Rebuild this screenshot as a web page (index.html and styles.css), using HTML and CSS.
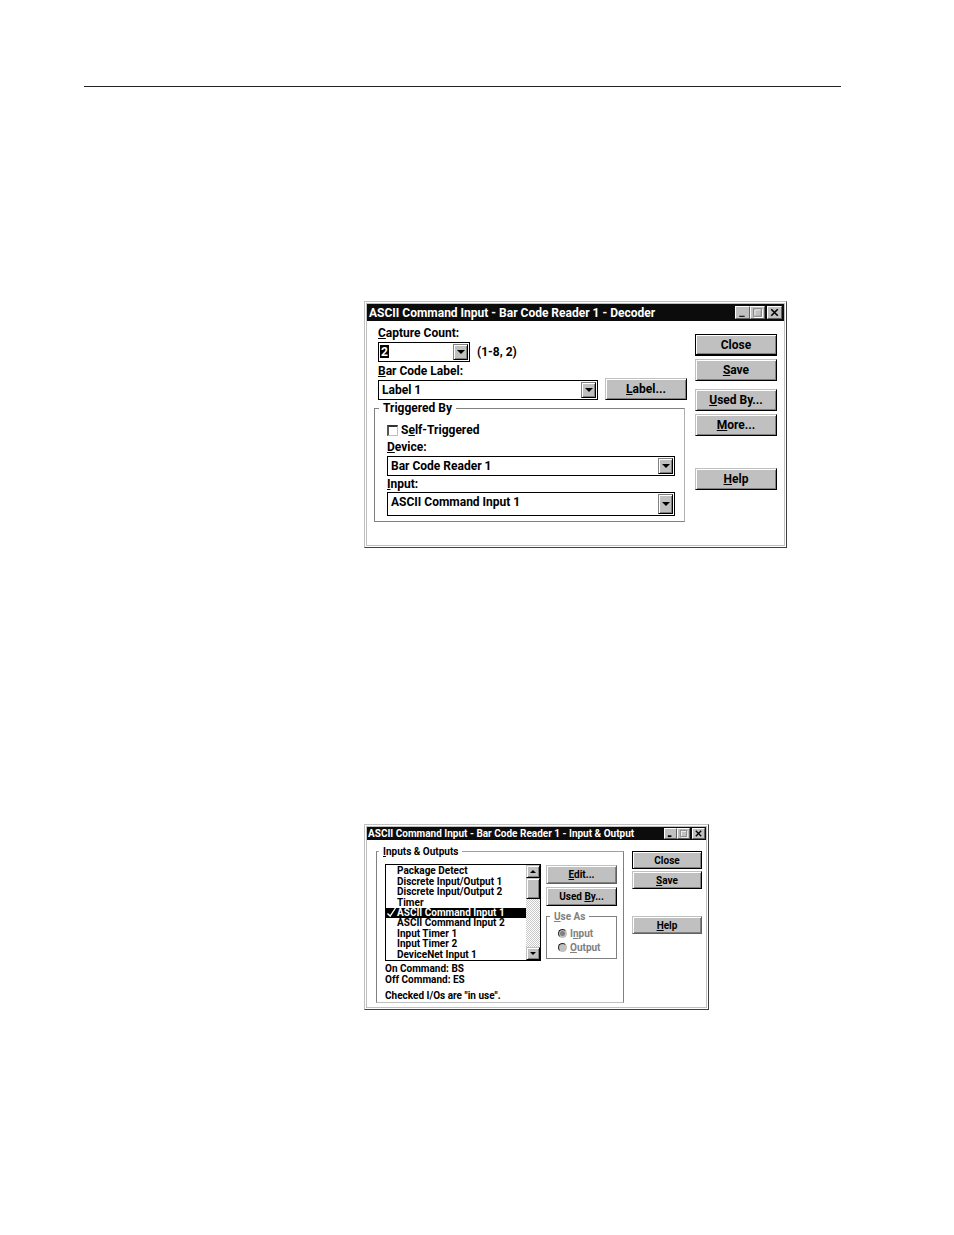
FILE: index.html
```html
<!DOCTYPE html>
<html lang="en">

<head>
    <meta charset="UTF-8">
    <title>ASCII Command Input</title>
    <link rel="stylesheet" href="styles.css">
</head>
<body>
<hr class="page-rule">

<main class="figures">
    <section class="dialog" aria-labelledby="decoder-title">
        <div class="frame">
            <header class="titlebar">
                <h2 id="decoder-title">ASCII Command Input - Bar Code Reader 1 - Decoder</h2>
                <div class="window-buttons">
                    <button type="button" aria-label="Minimize"><svg viewBox="0 0 12 10"><path d="M3 8.5h5" stroke="#000" stroke-width="1"/></svg></button>
                    <button type="button" aria-label="Maximize" disabled><svg viewBox="0 0 12 10"><path d="M3.5 2.5h7v7h-7z" fill="none" stroke="#fff"/><path d="M2.5 1.5h7v7h-7z" fill="none" stroke="#808080"/></svg></button>
                    <button type="button" aria-label="Close window"><svg viewBox="0 0 12 10"><path d="M3 2l6 6M9 2l-6 6" stroke="#000" stroke-width="1.5"/></svg></button>
                </div>
            </header>
            <form class="body">
                <div class="main">
                    <div class="field">
                        <label for="capture"><u>C</u>apture Count:</label>
                        <div class="row">
                            <div class="combo combo-short">
                                <input id="capture" class="highlighted" type="text" value="2">
                                <span class="arrow"><svg viewBox="0 0 8 4"><path d="M0 0h8L4 4z"/></svg></span>
                            </div>
                            <span>(1-8, 2)</span>
                        </div>
                    </div>
                    <div class="field">
                        <label for="barcode"><u>B</u>ar Code Label:</label>
                        <div class="row">
                            <div class="combo">
                                <select id="barcode"><option>Label 1</option></select>
                                <span class="arrow"><svg viewBox="0 0 8 4"><path d="M0 0h8L4 4z"/></svg></span>
                            </div>
                            <button type="button" class="btn btn-label"><span><u>L</u>abel...</span></button>
                        </div>
                    </div>
                    <fieldset class="group">
                        <legend>Triggered By</legend>
                        <label class="check"><input type="checkbox"><span>S<u>e</u>lf-Triggered</span></label>
                        <label for="device"><u>D</u>evice:</label>
                        <div class="combo">
                            <select id="device"><option>Bar Code Reader 1</option></select>
                            <span class="arrow"><svg viewBox="0 0 8 4"><path d="M0 0h8L4 4z"/></svg></span>
                        </div>
                        <label for="input"><u>I</u>nput:</label>
                        <div class="combo combo-tall">
                            <select id="input"><option>ASCII Command Input 1</option></select>
                            <span class="arrow"><svg viewBox="0 0 8 4"><path d="M0 0h8L4 4z"/></svg></span>
                        </div>
                    </fieldset>
                </div>
                <div class="side">
                    <button type="button" class="btn btn-default">Close</button>
                    <button type="button" class="btn"><span><u>S</u>ave</span></button>
                    <button type="button" class="btn btn-apart"><span><u>U</u>sed By...</span></button>
                    <button type="button" class="btn"><span><u>M</u>ore...</span></button>
                    <button type="button" class="btn btn-help"><span><u>H</u>elp</span></button>
                </div>
            </form>
        </div>
    </section>

    <section class="dialog dialog-small" aria-labelledby="io-title">
        <div class="frame">
            <header class="titlebar">
                <h2 id="io-title">ASCII Command Input - Bar Code Reader 1 - Input &amp; Output</h2>
                <div class="window-buttons">
                    <button type="button" aria-label="Minimize"><svg viewBox="0 0 12 10"><path d="M3 8h4" stroke="#000" stroke-width="2"/></svg></button>
                    <button type="button" aria-label="Maximize" disabled><svg viewBox="0 0 12 10"><path d="M3.5 2.5h7v7h-7z" fill="none" stroke="#fff"/><path d="M2.5 1.5h7v7h-7z" fill="none" stroke="#808080"/></svg></button>
                    <button type="button" aria-label="Close window"><svg viewBox="0 0 12 10"><path d="M3 2l6 6M9 2l-6 6" stroke="#000" stroke-width="1.5"/></svg></button>
                </div>
            </header>
            <form class="body">
                <fieldset class="group io">
                    <legend><u>I</u>nputs &amp; Outputs</legend>
                    <div class="io-columns">
                        <div class="listbox">
                            <ul role="listbox" aria-label="Inputs and outputs">
                                <li role="option">Package Detect</li>
                                <li role="option">Discrete Input/Output 1</li>
                                <li role="option">Discrete Input/Output 2</li>
                                <li role="option">Timer</li>
                                <li role="option" class="selected" aria-selected="true"><svg class="tick" viewBox="0 0 11 10"><path d="M1 6l3 3 6-9" fill="none" stroke="#fff" stroke-width="1.5"/></svg>ASCII Command Input 1</li>
                                <li role="option">ASCII Command Input 2</li>
                                <li role="option">Input Timer 1</li>
                                <li role="option">Input Timer 2</li>
                                <li role="option">DeviceNet Input 1</li>
                            </ul>
                            <div class="scrollbar">
                                <button type="button" aria-label="Scroll up"><svg viewBox="0 0 6 3"><path d="M0 3h6L3 0z"/></svg></button>
                                <div class="thumb"></div>
                                <button type="button" class="down" aria-label="Scroll down"><svg viewBox="0 0 6 3"><path d="M0 0h6L3 3z"/></svg></button>
                            </div>
                        </div>
                        <div class="io-actions">
                            <button type="button" class="btn btn-soft"><span><u>E</u>dit...</span></button>
                            <button type="button" class="btn"><span>Used <u>B</u>y...</span></button>
                            <fieldset class="group use-as" disabled>
                                <legend><u>U</u>se As</legend>
                                <label><input type="radio" name="use" checked><span>I<u>n</u>put</span></label>
                                <label><input type="radio" name="use"><span><u>O</u>utput</span></label>
                            </fieldset>
                        </div>
                    </div>
                    <p>On Command: BS</p>
                    <p>Off Command: ES</p>
                    <p class="note">Checked I/Os are "in use".</p>
                </fieldset>
                <div class="side">
                    <button type="button" class="btn btn-default">Close</button>
                    <button type="button" class="btn"><span><u>S</u>ave</span></button>
                    <button type="button" class="btn btn-soft btn-help"><span><u>H</u>elp</span></button>
                </div>
            </form>
        </div>
    </section>
</main>
</body>
</html>
```
FILE: styles.css
```css
* {
    box-sizing: border-box;
}
body {
    margin: 0;
    padding: 86px 113px 80px 84px;
    background: #fff;
    color: #000;
    font: bold 12px/14px Roboto, "Liberation Sans", sans-serif;
}
.page-rule {
    margin: 0;
    border: 0;
    border-top: 1px solid #222;
}
.figures {
    margin-left: 280px;
    padding-top: 214px;
}

/* window frame */
.dialog {
    max-width: 423px;
    padding: 1px;
    border: 1px solid #c0c0c0;
    border-right-color: #404040;
    border-bottom-color: #404040;
}
.frame {
    border: 1px solid #c0c0c0;
}
.titlebar {
    display: flex;
    align-items: center;
    justify-content: space-between;
    height: 17px;
    padding: 0 2px;
    background: #0c0c0c;
    color: #fff;
}
.titlebar h2 {
    margin: 0;
    font: inherit;
    white-space: nowrap;
}
.window-buttons {
    display: flex;
}
.window-buttons button {
    display: flex;
    width: 15px;
    height: 13px;
    padding: 0;
    border: 1px solid #fff;
    border-right-color: #606060;
    border-bottom-color: #606060;
    background: #c0c0c0;
}
.window-buttons button:last-child {
    margin-left: 2px;
}
.window-buttons svg {
    width: 100%;
    height: 100%;
}
.body {
    display: flex;
    gap: 8px;
    padding: 0 7px 23px;
}

/* fields */
.main {
    flex: 1;
    padding-top: 5px;
}
label {
    display: block;
}
.field {
    margin: 0 0 2px 4px;
}
.row {
    display: flex;
    align-items: center;
    gap: 7px;
    margin-top: 2px;
}
.combo {
    position: relative;
    flex: 1;
    height: 20px;
    border: 1px solid #000;
}
.combo-short {
    flex: 0 0 92px;
}
.combo select,
.combo input {
    display: block;
    width: 100%;
    height: 100%;
    padding: 0 20px 0 3px;
    border: 0;
    background: none;
    appearance: none;
    color: inherit;
    font: inherit;
    outline: 0;
}
.combo .highlighted {
    padding-left: 2px;
    background: linear-gradient(#000, #000) 1px 2px / 9px 13px no-repeat;
    color: #fff;
}
.arrow {
    position: absolute;
    top: 1px;
    right: 1px;
    bottom: 1px;
    display: flex;
    align-items: center;
    justify-content: center;
    width: 15px;
    border: 1px solid #808080;
    border-right-color: #000;
    border-bottom-color: #000;
    background: #c0c0c0;
    box-shadow: inset 1px 1px #fff, inset -1px -1px #808080;
    pointer-events: none;
}
.arrow svg {
    width: 8px;
    height: 4px;
}
.group {
    min-width: 0;
    margin: 0;
    border: 1px solid #808080;
}
.group legend {
    padding: 0 4px;
}
.main .group {
    margin: -1px 2px 0 0;
    padding: 8px 9px 5px 12px;
    border-right-color: #b0b0b0;
}
.main .group legend {
    margin-left: -8px;
}
.check {
    display: flex;
    align-items: center;
    gap: 3px;
    margin-bottom: 3px;
}
.check input {
    width: 11px;
    height: 11px;
    margin: 0;
    border: 1px solid #c0c0c0;
    border-top: 2px solid #333;
    border-left: 2px solid #555;
    appearance: none;
}
.group .combo {
    margin: 2px 0 1px;
}
.group .combo-tall {
    height: 24px;
    margin: 1px 0 0;
}
.combo-tall select {
    padding-bottom: 4px;
}

/* push buttons */
.btn {
    height: 22px;
    padding: 0;
    border: 1px solid #c0c0c0;
    border-right: 1px solid #000;
    border-bottom: 1px solid #000;
    background: #c0c0c0;
    box-shadow: inset 1px 1px #fff, inset -1px -1px #808080;
    color: #000;
    font: inherit;
}
.btn-default {
    border: 1px solid #000;
    border-bottom-width: 2px;
}
.btn-soft {
    border-right-color: #606060;
    border-bottom-color: #606060;
}
.btn-label {
    flex: 0 0 82px;
    margin-top: -2px;
}
.side {
    display: flex;
    flex: 0 0 82px;
    flex-direction: column;
    gap: 3px;
    padding-top: 13px;
}
.btn-apart {
    margin-top: 5px;
}
.btn-help {
    margin-top: 29px;
}

/* input & output window */
.dialog-small {
    max-width: 345px;
    margin-top: 276px;
    font-size: 10px;
    line-height: 11px;
}
.dialog-small .titlebar {
    height: 13px;
    padding: 0 1px;
}
.dialog-small .window-buttons button {
    width: 13px;
    height: 11px;
}
.dialog-small .body {
    padding: 6px 4px 4px 9px;
}
.dialog-small .side {
    flex-basis: 70px;
    gap: 2px;
    padding-top: 5px;
}
.dialog-small .btn {
    height: 18px;
}
.dialog-small .btn-default {
    border-bottom-width: 1px;
}
.dialog-small .btn-help {
    margin-top: 25px;
}
.io {
    flex: 1;
    padding: 7px 6px 1px 8px;
    border-color: #a0a0a0 #808080 #c0c0c0;
}
.io legend {
    margin-left: -6px;
}
.io-columns {
    display: flex;
    gap: 5px;
    margin-bottom: 2px;
}
.listbox {
    display: flex;
    flex: 1;
    height: 97px;
    border: 1px solid #000;
}
.listbox ul {
    display: grid;
    flex: 1;
    grid-template-rows: repeat(9, 1fr);
    margin: 0;
    padding: 1px 0 0;
    list-style: none;
}
.listbox li {
    display: flex;
    align-items: center;
    min-height: 0;
    padding-left: 11px;
    line-height: 10px;
    white-space: nowrap;
}
.listbox .selected {
    padding-left: 0;
    background: #000;
    color: #fff;
}
.tick {
    width: 11px;
    height: 9px;
}
.scrollbar {
    display: flex;
    flex: 0 0 14px;
    flex-direction: column;
    background: repeating-conic-gradient(#c8c8c8 0 25%, #fff 0 50%) 0 0 / 2px 2px;
}
.scrollbar button,
.thumb {
    display: flex;
    align-items: center;
    justify-content: center;
    height: 13px;
    padding: 0;
    border: 1px solid #c0c0c0;
    border-right-color: #000;
    border-bottom-color: #000;
    background: #c0c0c0;
    box-shadow: inset 1px 1px #fff, inset -1px -1px #808080;
}
.scrollbar svg {
    width: 6px;
    height: 3px;
}
.thumb {
    height: 21px;
}
.scrollbar .down {
    margin-top: auto;
}
.io-actions {
    display: flex;
    flex: 0 0 71px;
    flex-direction: column;
    gap: 3px;
    padding-top: 1px;
}
.io-actions .btn {
    height: 19px;
}
.use-as {
    margin-top: 2px;
    padding: 4px 4px 4px 11px;
    color: #808080;
}
.use-as legend {
    margin-left: -8px;
}
.use-as label {
    display: flex;
    align-items: center;
    gap: 3px;
    height: 14px;
}
.use-as input {
    width: 9px;
    height: 9px;
    margin: 0;
    border: 1px solid #c0c0c0;
    border-top-color: #222;
    border-left-color: #222;
    border-radius: 50%;
    background: #c0c0c0;
    appearance: none;
}
.use-as input:checked {
    background: radial-gradient(#808080 2px, #c0c0c0 3px);
}
.io p {
    margin: 0;
}
.io .note {
    margin-top: 5px;
}
```
